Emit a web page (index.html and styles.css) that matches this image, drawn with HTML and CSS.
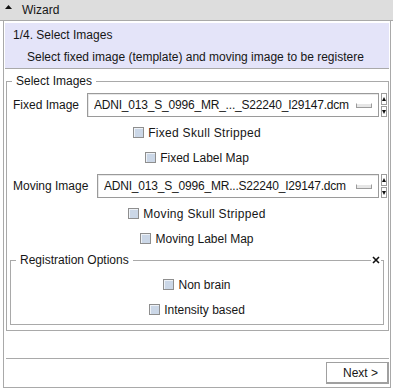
FILE: index.html
```html
<!DOCTYPE html>
<html lang="en">
<head>
    <meta charset="UTF-8">
    <title>Wizard</title>
    <link rel="stylesheet" href="styles.css">
</head>
<body>
    <div class="header">
        <svg class="collapse" width="7" height="5" viewBox="0 0 7 5"><path d="M0 4 L3.5 0 L7 4 Z" fill="#111"/></svg>
        <span>Wizard</span>
    </div>
    <div class="wizard">
        <div class="info">
            <div class="step">1/4. Select Images</div>
            <div class="desc">Select fixed image (template) and moving image to be registere</div>
        </div>

        <div class="group outer">
            <div class="group-title">
                <span class="tick"></span>
                <span class="title-text">Select Images</span>
                <span class="rule"></span>
            </div>
            <div class="group-body">
                <div class="file-row">
                    <span class="file-label">Fixed Image</span>
                    <div class="combo">
                        <span class="combo-text">ADNI_013_S_0996_MR_..._S22240_I29147.dcm</span>
                        <span class="grip"></span>
                    </div>
                    <div class="spinner"><span class="up"></span><span class="down"></span></div>
                </div>
                <label class="check-row first"><span class="check"></span><span class="wide">Fixed Skull Stripped</span></label>
                <label class="check-row"><span class="check"></span>Fixed Label Map</label>

                <div class="file-row moving">
                    <span class="file-label">Moving Image</span>
                    <div class="combo">
                        <span class="combo-text">ADNI_013_S_0996_MR...S22240_I29147.dcm</span>
                        <span class="grip"></span>
                    </div>
                    <div class="spinner"><span class="up"></span><span class="down"></span></div>
                </div>
                <label class="check-row first"><span class="check"></span><span class="wide">Moving Skull Stripped</span></label>
                <label class="check-row"><span class="check"></span>Moving Label Map</label>

                <div class="group inner">
                    <div class="group-title">
                        <span class="tick"></span>
                        <span class="title-text">Registration Options</span>
                        <span class="rule plain"></span>
                        <svg class="close" width="8" height="8" viewBox="0 0 8 8"><path d="M1 1 L7 7 M7 1 L1 7" stroke="#111" stroke-width="1.6"/></svg>
                        <span class="rule end"></span>
                    </div>
                    <div class="group-body">
                        <label class="check-row"><span class="check"></span>Non brain</label>
                        <label class="check-row"><span class="check"></span>Intensity based</label>
                    </div>
                </div>
            </div>
        </div>

        <div class="spacer"></div>
        <div class="footer">
            <button type="button" class="next">Next &gt;</button>
        </div>
    </div>
</body>
</html>
```

FILE: styles.css
```css
body {
    margin: 0;
    width: 393px;
    height: 392px;
    overflow: hidden;
    background: #fff;
    color: #161616;
    font-family: "Liberation Sans", Arial, sans-serif;
    font-size: 12px;
}
.header {
    height: 20px;
    background: #dddddd;
    border-bottom: 1px solid #a9a9a9;
    display: flex;
    align-items: center;
    padding-left: 5px;
}
.collapse {
    margin: 0 10px 5px 0;
}
.wizard {
    box-sizing: border-box;
    height: 367px;
    margin: 0 2px 0 3px;
    border: 1px solid #a9a9a9;
    border-top: 0;
    display: flex;
    flex-direction: column;
}
.info {
    margin: 2px 1px 0;
    padding: 5px 0 4px;
    line-height: 14px;
    background: #e4e4f9;
    border-bottom: 1px solid #a9a9a9;
}
.step {
    padding-left: 8px;
}
.desc {
    margin-top: 8px;
    padding-left: 22px;
}

/* titled border groups */
.group-title {
    height: 14px;
    display: flex;
    align-items: center;
}
.tick {
    align-self: flex-end;
    width: 5px;
    height: 6px;
    border-top: 1px solid #a9a9a9;
    border-left: 1px solid #a9a9a9;
}
.title-text {
    padding: 0 4px;
}
.rule {
    flex: 1;
    align-self: flex-end;
    height: 6px;
    border-top: 1px solid #a9a9a9;
    border-right: 1px solid #a9a9a9;
}
.rule.plain {
    border-right: 0;
}
.rule.end {
    flex: 0 0 2px;
}
.close {
    margin: 0 1px;
}
.group-body {
    border: 1px solid #a9a9a9;
    border-top: 0;
}
.outer {
    margin: 5px 1px 0 2px;
}
.outer > .group-body {
    padding: 5px 1px 5px 0;
}
.inner {
    margin: 2px 3px 0 3px;
}
.inner > .group-body {
    padding: 5px 0 2px;
}

/* combo rows */
.file-row {
    display: flex;
    align-items: center;
    height: 24px;
    padding-left: 6px;
}
.file-row.moving {
    margin-top: 4px;
}
.file-label {
    width: 74px;
    flex: none;
}
.moving .file-label {
    width: 84px;
}
.combo {
    flex: 1;
    min-width: 0;
    box-sizing: border-box;
    height: 24px;
    border: 1px solid #9a9a9a;
    box-shadow: inset 1px 1px 0 #e8e8e8;
    display: flex;
    align-items: center;
    padding: 0 6px;
}
.combo-text {
    flex: 1;
    min-width: 0;
    white-space: nowrap;
    overflow: hidden;
    letter-spacing: -0.2px;
}
.grip {
    flex: none;
    width: 14px;
    height: 3px;
    border: 1px solid #9c9c9c;
    border-top-color: #fff;
    background: #e6e6e6;
    margin-left: 6px;
}
.spinner {
    flex: none;
    box-sizing: border-box;
    width: 6px;
    height: 24px;
    margin-left: 2px;
    display: flex;
    flex-direction: column;
    gap: 1px;
}
.spinner span {
    flex: 1;
    border: 1px solid #9c9c9c;
    position: relative;
}
.spinner .up::after,
.spinner .down::after {
    content: "";
    position: absolute;
    left: 0;
    top: 3px;
    border-left: 2px solid transparent;
    border-right: 2px solid transparent;
}
.spinner .up::after {
    border-bottom: 4px solid #111;
}
.spinner .down::after {
    border-top: 4px solid #111;
}

/* checkboxes */
.check-row {
    height: 25px;
    display: flex;
    align-items: center;
    justify-content: center;
}
.check-row.first {
    margin-top: 3px;
}
.wide {
    letter-spacing: 0.3px;
}
.check {
    box-sizing: border-box;
    width: 11px;
    height: 11px;
    border: 1px solid #8e8e8e;
    background: #cbd7e7;
    box-shadow: inset 1px 1px 0 #eef2f7;
    margin-right: 4px;
}

.spacer {
    flex: 1;
}
.footer {
    height: 28px;
    margin: 0 1px 0 2px;
    border-top: 1px solid #a9a9a9;
    display: flex;
    justify-content: flex-end;
    align-items: flex-start;
}
.next {
    margin-top: 3px;
    width: 63px;
    height: 22px;
    background: #fff;
    border: 1px solid #a0a0a0;
    box-shadow: inset -1px -1px 0 #a0a0a0, inset 1px 1px 0 #fff;
    font: inherit;
    color: inherit;
    text-align: right;
    padding: 0 10px 0 0;
}
```
